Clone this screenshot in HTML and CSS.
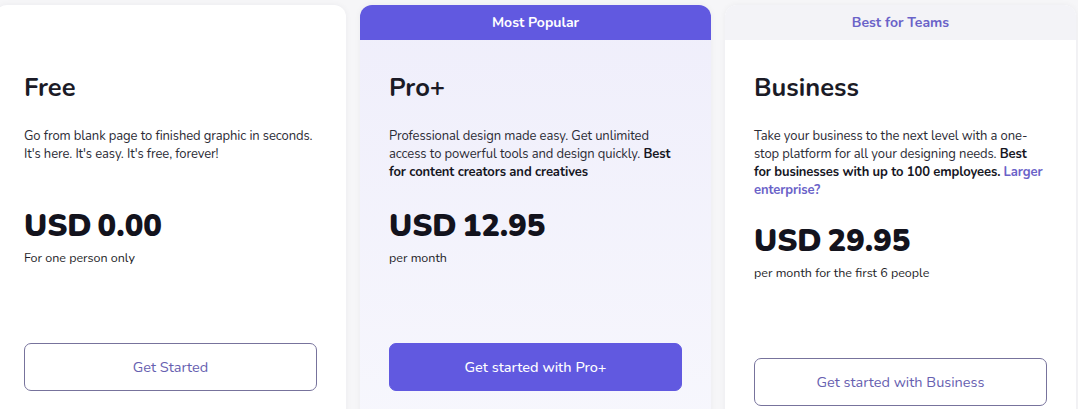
FILE: index.html
```html
<!DOCTYPE html>
<html lang="en">
<head>
  <meta charset="UTF-8">
  <meta name="viewport" content="width=device-width, initial-scale=1.0">
  <title>Pricing</title>
  <link rel="stylesheet" href="styles.css">
</head>
<body>
  <div class="plans">
    <div class="plan">
      <div class="plan-tag"></div>
      <div class="plan-body">
        <h2>Free</h2>
        <p class="plan-desc">Go from blank page to finished graphic in seconds. It's here. It's easy. It's free, forever!</p>
        <div class="price">USD 0.00</div>
        <p class="price-note">For one person only</p>
        <button class="btn">Get Started</button>
      </div>
    </div>

    <div class="plan plan-popular">
      <div class="plan-tag">Most Popular</div>
      <div class="plan-body">
        <h2>Pro+</h2>
        <p class="plan-desc">Professional design made easy. Get unlimited access to powerful tools and design quickly. <b>Best for content creators and creatives</b></p>
        <div class="price">USD 12.95</div>
        <p class="price-note">per month</p>
        <button class="btn btn-primary">Get started with Pro+</button>
      </div>
    </div>

    <div class="plan plan-teams">
      <div class="plan-tag">Best for Teams</div>
      <div class="plan-body">
        <h2>Business</h2>
        <p class="plan-desc">Take your business to the next level with a one-stop platform for all your designing needs. <b>Best for businesses with up to 100 employees.</b> <a href="#">Larger enterprise?</a></p>
        <div class="price">USD 29.95</div>
        <p class="price-note">per month for the first 6 people</p>
        <button class="btn">Get started with Business</button>
      </div>
    </div>
  </div>
</body>
</html>
```

FILE: styles.css
```css
body {
  margin: 0;
  background-color: #f6f6f8;
  color: #1b1b26;
  font-family: Nunito, Lato, "Noto Sans", sans-serif;
  overflow: hidden;
}

.plans {
  display: flex;
  gap: 14px;
  padding-top: 5px;
  margin-left: -5px;
}

.plan {
  flex: 0 0 351px;
  min-height: 430px;
  border-radius: 12px;
  background-color: #fff;
  box-shadow: 0 0 6px rgba(20, 20, 60, 0.05);
  overflow: hidden;
}

.plan-tag {
  height: 35px;
  line-height: 35px;
  text-align: center;
  font-size: 14px;
  font-weight: 700;
}

.plan-popular {
  background: linear-gradient(#efeefb, #f7f7fd);
}

.plan-popular .plan-tag {
  background-color: #6159e0;
  color: #fff;
}

.plan-teams .plan-tag {
  background-color: #f3f3f7;
  color: #6a62c8;
}

.plan-body {
  padding: 33px 29px 0;
}

.plan-body h2 {
  margin: 0;
  font-size: 25.5px;
  line-height: 30px;
  font-weight: 700;
}

.plan-desc {
  margin: 24px 2px 0 0;
  min-height: 57px;
  font-size: 13px;
  line-height: 18px;
  letter-spacing: -0.1px;
  color: #2b2b35;
}

.plan-desc b {
  color: #16161f;
}

.plan-desc a {
  color: #6a62c8;
  font-weight: 700;
  text-decoration: none;
}

.price {
  margin-top: 24px;
  font-size: 31px;
  line-height: 36px;
  font-weight: 900;
  word-spacing: -3px;
  color: #13131d;
}

.price-note {
  margin: 5px 0 0;
  font-size: 12.5px;
  line-height: 18px;
  color: #1e1e28;
}

.btn {
  display: block;
  width: 100%;
  height: 48px;
  margin-top: 76px;
  border: 1px solid #77739c;
  border-radius: 7px;
  background-color: #fff;
  color: #6660b0;
  font-family: inherit;
  font-size: 14.5px;
  cursor: pointer;
}

.btn-primary {
  border-color: #6159e0;
  background-color: #6159e0;
  color: #fff;
  font-weight: 500;
}
```
